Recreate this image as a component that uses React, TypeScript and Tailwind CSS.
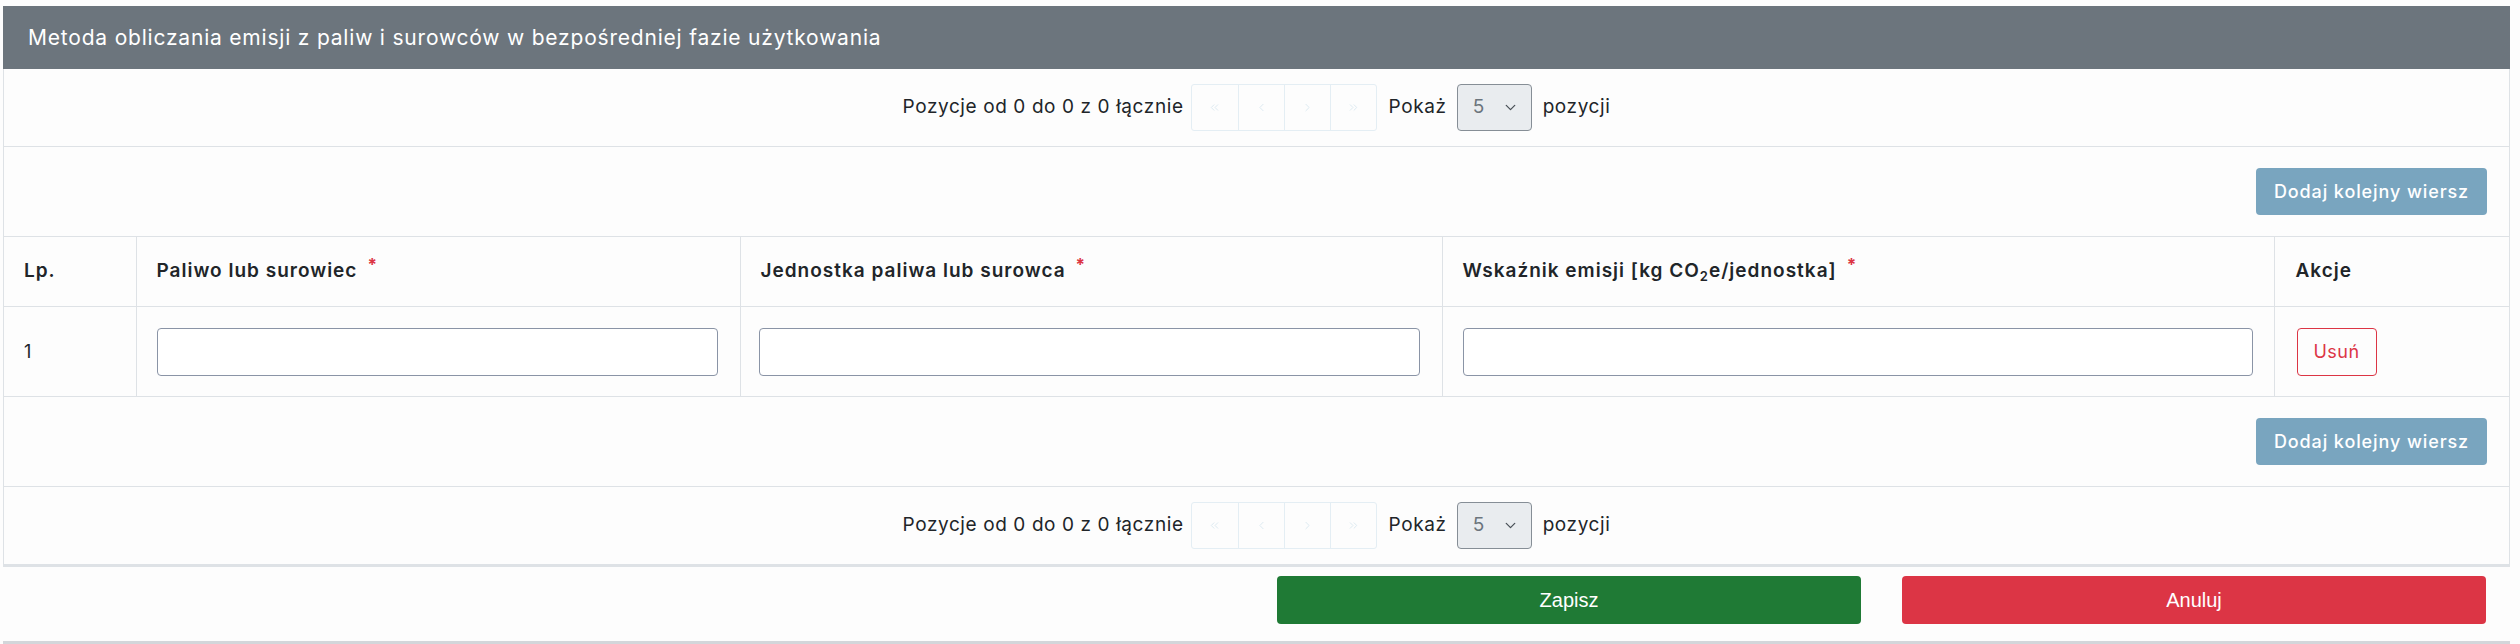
import React from "react";
import { ChevronsLeft, ChevronLeft, ChevronRight, ChevronsRight, ChevronDown } from "lucide-react";

const FONT = "font-[family-name:Inter,'Liberation_Sans',sans-serif]";

function Pager() {
  const cells = [ChevronsLeft, ChevronLeft, ChevronRight, ChevronsRight];
  return (
    <div className="flex items-center justify-center text-[19px] tracking-[0.6px] text-[#212529]">
      <span>Pozycje od 0 do 0 z 0 łącznie</span>
      <div className="ml-[7px] flex h-[47px] rounded-[3px] border border-[#e4eef4]">
        {cells.map((Icon, i) => (
          <div
            key={i}
            className={
              i === 0
                ? "flex w-[46px] items-center justify-center text-[#d5e5ee]"
                : "flex w-[46px] items-center justify-center border-l border-[#e4eef4] text-[#d5e5ee]"
            }
          >
            <Icon size={13} strokeWidth={1.5} />
          </div>
        ))}
      </div>
      <span className="ml-[12px]">Pokaż</span>
      <div className="ml-[10px] flex h-[47px] w-[75px] items-center justify-between rounded-[4px] border border-[#868e96] bg-[#e9ecef] pl-[15px] pr-[12px] text-[#6c757d]">
        <span>5</span>
        <ChevronDown size={17} strokeWidth={1.8} className="text-[#495057]" />
      </div>
      <span className="ml-[11px]">pozycji</span>
    </div>
  );
}

function AddRowButton() {
  return (
    <button className="h-[47px] w-[231px] rounded-[4px] bg-[#79a5bf] text-[18px] font-medium tracking-[0.9px] text-white">
      Dodaj kolejny wiersz
    </button>
  );
}

function Req() {
  return <span className="ml-[10px] align-[6px] text-[17px] font-bold leading-none text-[#dc3545]">*</span>;
}

export default function App() {
  return (
    <div className={`${FONT} min-h-[644px] bg-[#fdfdfd] text-[#212529]`}>
      <div className="pt-[6px]">
        {/* card */}
        <div className="ml-[3px] w-[2507px] border-b-[3px] border-[#dee2e6]">
          <div className="flex h-[63px] items-center bg-[#6c757d] pl-[25px] text-[21px] tracking-[0.8px] text-white">
            Metoda obliczania emisji z paliw i surowców w bezpośredniej fazie użytkowania
          </div>
          <div className="border-x border-[#dee2e6]">
            <div className="flex h-[78px] items-center justify-center border-b border-[#dee2e6]">
              <Pager />
            </div>
            <div className="flex h-[89px] items-center justify-end pr-[22px]">
              <AddRowButton />
            </div>
            <table className="w-full table-fixed border-collapse text-[19px]">
              <colgroup>
                <col className="w-[132px]" />
                <col className="w-[604px]" />
                <col className="w-[702px]" />
                <col className="w-[832px]" />
                <col />
              </colgroup>
              <thead>
                <tr className="h-[70px] border-y border-[#dee2e6] tracking-[1px]">
                  <th className="px-[20px] text-left font-semibold">Lp.</th>
                  <th className="border-l border-[#dee2e6] px-[20px] text-left font-semibold">
                    Paliwo lub surowiec
                    <Req />
                  </th>
                  <th className="border-l border-[#dee2e6] px-[20px] text-left font-semibold">
                    Jednostka paliwa lub surowca
                    <Req />
                  </th>
                  <th className="border-l border-[#dee2e6] px-[20px] text-left font-semibold">
                    Wskaźnik emisji [kg CO<sub className="text-[13px]">2</sub>e/jednostka]
                    <Req />
                  </th>
                  <th className="border-l border-[#dee2e6] px-[21px] text-left font-semibold">Akcje</th>
                </tr>
              </thead>
              <tbody>
                <tr className="h-[90px] border-b border-[#dee2e6]">
                  <td className="px-[20px] text-[18px]">1</td>
                  <td className="border-l border-[#dee2e6] pl-[20px] pr-[22px]">
                    <input className="block h-[48px] w-full rounded-[4px] border border-[#8a94a6] bg-white px-3" />
                  </td>
                  <td className="border-l border-[#dee2e6] pl-[18px] pr-[22px]">
                    <input className="block h-[48px] w-full rounded-[4px] border border-[#8a94a6] bg-white px-3" />
                  </td>
                  <td className="border-l border-[#dee2e6] pl-[20px] pr-[21px]">
                    <input className="block h-[48px] w-full rounded-[4px] border border-[#8a94a6] bg-white px-3" />
                  </td>
                  <td className="border-l border-[#dee2e6] pl-[22px]">
                    <button className="h-[48px] w-[80px] rounded-[4px] border border-[#dc3545] text-[18px] tracking-[0.5px] text-[#dc3545]">
                      Usuń
                    </button>
                  </td>
                </tr>
              </tbody>
            </table>
            <div className="flex h-[90px] items-center justify-end border-b border-[#dee2e6] pr-[22px]">
              <AddRowButton />
            </div>
            <div className="flex h-[77px] items-center justify-center">
              <Pager />
            </div>
          </div>
        </div>
        {/* form actions */}
        <div className="ml-[3px] flex h-[77px] w-[2507px] justify-end gap-[41px] border-b-[3px] border-[#d3d6da] pr-[24px] pt-[9px] font-[family-name:'Liberation_Sans',sans-serif] text-[20px] text-white">
          <button className="h-[48px] w-[584px] rounded-[4px] bg-[#1f7a35]">Zapisz</button>
          <button className="h-[48px] w-[584px] rounded-[4px] bg-[#dc3545]">Anuluj</button>
        </div>
      </div>
    </div>
  );
}
